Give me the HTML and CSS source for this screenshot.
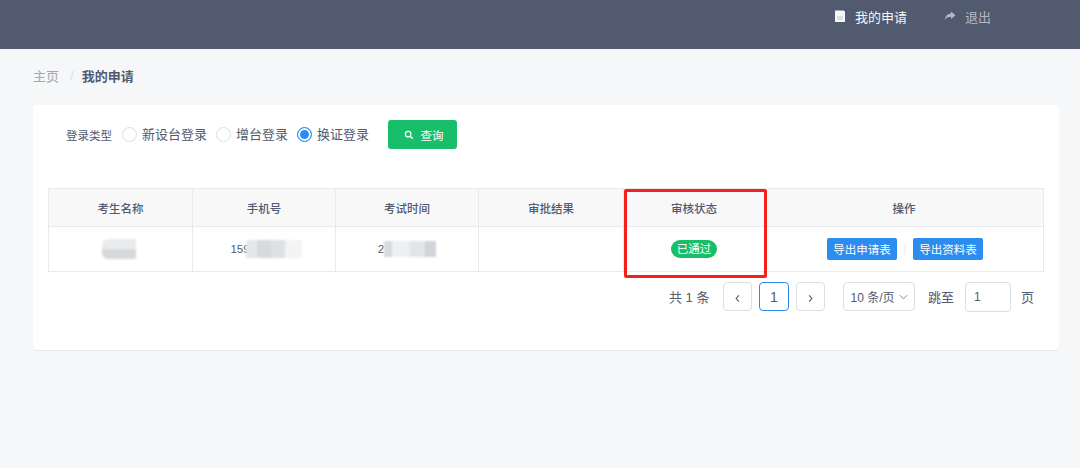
FILE: index.html
```html
<!DOCTYPE html>
<html lang="zh-CN">
<head>
    <meta charset="UTF-8">
    <title>我的申请</title>
    <link rel="stylesheet" href="styles.css">
</head>
<body>
    <header class="top-bar">
        <a class="top-link active">
            <svg class="top-icon" viewBox="0 0 12 12"><path d="M1 0.500h8.500l1.500 1v10.500h-10z" fill="#f4f5f7"/><path d="M3 7h6M3 9h6" stroke="#c3c7cf" stroke-width="1"/></svg>
            我的申请
        </a>
        <a class="top-link">
            <svg class="top-icon" viewBox="0 0 12 12"><path d="M7 1.500l4.500 3.800-4.500 3.700v-2.200c-2.500 0-4.500 .6-6 3 .3-3.500 2.500-6 6-6.200z" fill="#b5b9c3"/></svg>
            退出
        </a>
    </header>

    <main class="content">
        <nav class="breadcrumb">
            <span class="crumb">主页</span>
            <span class="crumb-sep">/</span>
            <strong class="crumb-current">我的申请</strong>
        </nav>

        <section class="card">
            <form class="filter">
                <span class="filter-label">登录类型</span>
                <label class="radio"><i class="radio-dot"></i>新设台登录</label>
                <label class="radio"><i class="radio-dot"></i>增台登录</label>
                <label class="radio checked"><i class="radio-dot"></i>换证登录</label>
                <button type="button" class="search-btn">
                    <svg class="search-icon" viewBox="0 0 12 12"><circle cx="5" cy="5" r="3.300" fill="none" stroke="#fff" stroke-width="1.500"/><path d="M7.500 7.500l3 3" stroke="#fff" stroke-width="1.500"/></svg>
                    查询
                </button>
            </form>

            <table class="apply-table">
                <thead>
                    <tr>
                        <th class="col-name">考生名称</th>
                        <th class="col-phone">手机号</th>
                        <th class="col-time">考试时间</th>
                        <th class="col-result">审批结果</th>
                        <th class="col-status">审核状态</th>
                        <th>操作</th>
                    </tr>
                </thead>
                <tbody>
                    <tr>
                        <td><span class="mosaic mosaic-name"></span></td>
                        <td><span class="masked masked-phone">159<span class="mosaic mosaic-phone"></span></span></td>
                        <td><span class="masked">2<span class="mosaic mosaic-time"></span></span></td>
                        <td></td>
                        <td><span class="status-tag">已通过</span></td>
                        <td>
                            <div class="actions">
                                <button type="button" class="export-btn">导出申请表</button>
                                <i class="action-sep"></i>
                                <button type="button" class="export-btn">导出资料表</button>
                            </div>
                        </td>
                    </tr>
                </tbody>
            </table>

            <div class="pager">
                <span class="pager-total">共 1 条</span>
                <a class="page-box"><svg class="chevron" viewBox="0 0 8 10"><path d="M5.500 1.500l-3 3.500 3 3.500" fill="none" stroke="#515a6e" stroke-width="1.300"/></svg></a>
                <a class="page-box current">1</a>
                <a class="page-box"><svg class="chevron" viewBox="0 0 8 10"><path d="M2.500 1.500l3 3.500-3 3.500" fill="none" stroke="#515a6e" stroke-width="1.300"/></svg></a>
                <div class="page-size">10 条/页<svg class="caret" viewBox="0 0 10 6"><path d="M1 1l4 4 4-4" fill="none" stroke="#808695" stroke-width="1.100"/></svg></div>
                <span class="jump-label">跳至</span>
                <span class="jump-input">1</span>
                <span class="jump-unit">页</span>
            </div>

            <div class="highlight-box"></div>
        </section>
    </main>
</body>
</html>
```

FILE: styles.css
```css
* {
    margin: 0;
    padding: 0;
    box-sizing: border-box;
}

body {
    width: 1080px;
    height: 468px;
    overflow: hidden;
    background: #f5f7f9;
    color: #515a6e;
    font-family: "Liberation Sans", "Noto Sans CJK SC", sans-serif;
    font-size: 12px;
}

.top-bar {
    height: 49px;
    background: #515a6e;
    display: flex;
    justify-content: flex-end;
    gap: 37px;
    padding: 8px 89px 0 0;
}

.top-link {
    display: flex;
    align-items: center;
    gap: 9px;
    height: 16px;
    color: #b5b9c3;
    font-size: 13px;
}

.top-link.active {
    color: #f4f5f7;
}

.top-icon {
    width: 12px;
    height: 12px;
}

.content {
    padding: 0 21px 0 33px;
}

.breadcrumb {
    height: 52px;
    margin-bottom: 4px;
    display: flex;
    align-items: center;
    font-size: 13px;
}

.crumb {
    color: #a2a6af;
}

.crumb-sep {
    margin: 0 8px 0 11px;
    color: #dcdee2;
}

.crumb-current {
    color: #515a6e;
}

.card {
    position: relative;
    height: 245px;
    padding: 15px 15px 0;
    background: #fff;
    border-radius: 4px;
    box-shadow: 0 1px 1px rgba(0, 0, 0, 0.06);
}

.filter {
    height: 29px;
    display: flex;
    align-items: center;
    padding-left: 18px;
    color: #515a6e;
    font-size: 13px;
}

.filter-label {
    width: 56px;
    font-size: 11.500px;
}

.radio {
    display: flex;
    align-items: center;
    gap: 5px;
    margin-right: 9px;
    height: 16px;
    line-height: 15px;
}

.radio-dot {
    width: 15px;
    height: 15px;
    border: 1px solid #dcdee2;
    border-radius: 50%;
}

.radio.checked {
    margin-right: 19px;
}

.radio.checked .radio-dot {
    border-color: #2d8cf0;
    background: #2d8cf0;
    box-shadow: inset 0 0 0 2px #fff;
}

.search-btn {
    width: 69px;
    height: 29px;
    display: flex;
    align-items: center;
    justify-content: center;
    gap: 7px;
    padding-left: 2px;
    border: 0;
    border-radius: 3px;
    background: #19be6b;
    color: #fff;
    font: inherit;
    font-size: 11.500px;
}

.search-icon {
    width: 10px;
    height: 10px;
}

.apply-table {
    width: 996px;
    margin-top: 39px;
    border-collapse: collapse;
    table-layout: fixed;
    border: 1px solid #e8eaec;
}

.apply-table th,
.apply-table td {
    border: 1px solid #e8eaec;
    text-align: center;
    font-size: 11.500px;
}

.apply-table th {
    height: 38px;
    background: #f8f8f9;
    font-weight: 500;
    color: #515a6e;
}

.apply-table td {
    height: 45px;
}

.col-name {
    width: 144px;
}

.col-phone,
.col-time {
    width: 143px;
}

.col-result {
    width: 145px;
}

.col-status {
    width: 141px;
}

.masked {
    display: inline-flex;
    align-items: center;
    color: #515a6e;
}

.masked-phone {
    margin-left: 4px;
}

.mosaic {
    display: inline-block;
    height: 18px;
    filter: blur(1px);
    background: linear-gradient(90deg, #e6e7ea 0 20%, #d7d9dd 20% 45%, #dfe0e3 45% 70%, #f3f4f5 70%);
}

.mosaic-name {
    width: 34px;
    height: 20px;
    margin: 1px 0 0 -3px;
    border-radius: 6px 0 0 6px;
    background: linear-gradient(#eaebed 50%, #d6d8dc 50%);
}

.mosaic-phone {
    width: 56px;
    margin-left: -4px;
}

.mosaic-time {
    width: 52px;
    height: 16px;
    background: linear-gradient(90deg, #d9dade 0 15%, #eeeff1 15% 50%, #e3e4e7 50% 78%, #d2d4d9 78%);
}

.status-tag {
    display: inline-block;
    width: 46px;
    height: 18px;
    line-height: 18px;
    border-radius: 9px;
    background: #19be6b;
    color: #fff;
    font-size: 11.500px;
}

.actions {
    display: flex;
    align-items: center;
    justify-content: center;
    gap: 7px;
    padding-left: 2px;
}

.export-btn {
    width: 70px;
    height: 22px;
    border: 0;
    border-radius: 2px;
    background: #2d8cf0;
    color: #fff;
    font: inherit;
    font-size: 11.500px;
}

.action-sep {
    width: 2px;
    height: 11px;
    background: #f2f3f5;
}

.pager {
    display: flex;
    align-items: center;
    height: 29px;
    margin-top: 10px;
    padding-left: 621px;
    color: #515a6e;
    font-size: 13px;
}

.pager-total {
    width: 54px;
}

.page-box {
    width: 29px;
    height: 29px;
    margin-right: 7px;
    display: flex;
    align-items: center;
    justify-content: center;
    background: #fff;
    border: 1px solid #dcdee2;
    border-radius: 4px;
}

.page-box.current {
    width: 30px;
    border-color: #2d8cf0;
    color: #515a6e;
    font-size: 14px;
}

.chevron {
    width: 7px;
    height: 9px;
    margin-top: 3px;
}

.page-size {
    width: 72px;
    height: 29px;
    margin: 0 13px 0 11px;
    display: flex;
    align-items: center;
    justify-content: center;
    gap: 4px;
    border: 1px solid #dcdee2;
    border-radius: 4px;
    font-size: 12px;
}

.caret {
    width: 9px;
    height: 6px;
}

.jump-label {
    width: 37px;
}

.jump-input {
    width: 46px;
    height: 30px;
    line-height: 28px;
    padding-left: 8px;
    border: 1px solid #dcdee2;
    border-radius: 4px;
    font-size: 12px;
}

.jump-unit {
    margin-left: 10px;
}

/* red annotation drawn on top of the screenshot */
.highlight-box {
    position: absolute;
    left: 591px;
    top: 84px;
    width: 143px;
    height: 89px;
    border: 3px solid #f5201b;
    border-radius: 2px;
}
```
